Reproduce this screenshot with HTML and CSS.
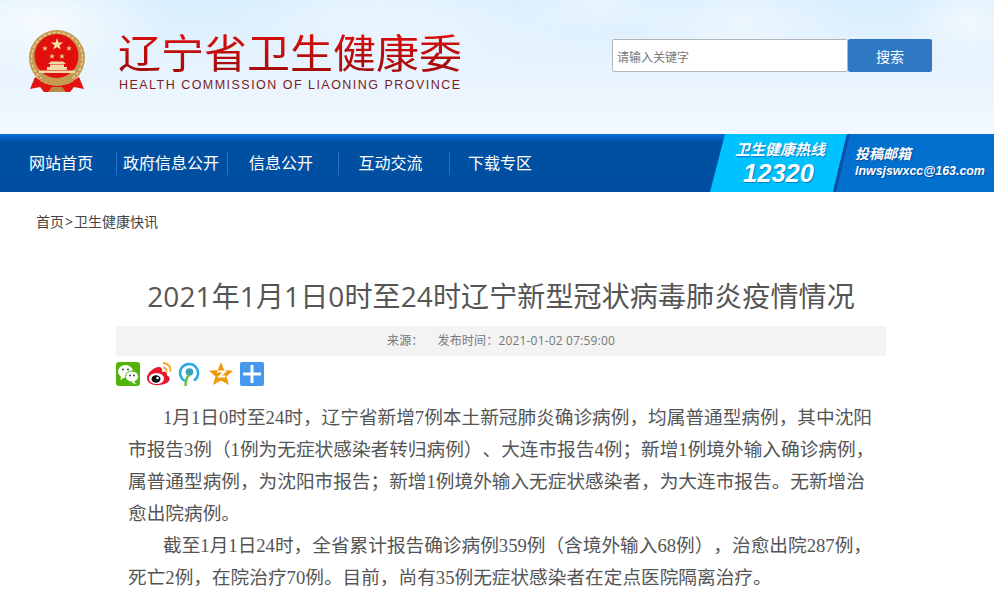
FILE: index.html
```html
<!DOCTYPE html>
<html lang="zh-CN">
<head>
    <meta charset="UTF-8">
    <meta name="viewport" content="width=device-width, initial-scale=1.0">
    <title>2021年1月1日0时至24时辽宁新型冠状病毒肺炎疫情情况</title>
    <link rel="stylesheet" href="styles.css">
</head>
<body>
    <!-- Header -->
    <header class="header">
        <svg class="emblem" width="58" height="62" viewBox="0 0 58 62">
            <path d="M7 47 L2 59 L12 57 L16 62 L42 62 L46 57 L56 59 L51 47 L40 54 L18 54 Z" fill="#e2140f"/>
            <circle cx="29" cy="28" r="28" fill="#c49a52"/>
            <circle cx="29" cy="28" r="25.500" fill="none" stroke="#e6cf94" stroke-width="1.500" stroke-dasharray="3 2"/>
            <circle cx="28.500" cy="26" r="22" fill="#e30f0e"/>
            <path d="M12 51 Q29 60 46 51 L42 46 Q29 52 16 46 Z" fill="#c49a52"/>
            <path d="M24 57 h10 l4 5 h-18 Z" fill="#b98a45"/>
            <polygon points="29,8 30.500,12.400 35.200,12.400 31.400,15.200 32.800,19.600 29,16.900 25.200,19.600 26.600,15.200 22.800,12.400 27.500,12.400" fill="#f6e3a8"/>
            <polygon points="17,15.500 17.800,17.500 19.800,17.500 18.200,18.800 18.800,20.800 17,19.600 15.200,20.800 15.800,18.800 14.200,17.500 16.200,17.500" fill="#eccf86"/>
            <polygon points="41,15.500 41.800,17.500 43.800,17.500 42.200,18.800 42.800,20.800 41,19.600 39.200,20.800 39.800,18.800 38.200,17.500 40.200,17.500" fill="#eccf86"/>
            <polygon points="24,23.500 24.800,25.500 26.800,25.500 25.200,26.800 25.800,28.800 24,27.600 22.200,28.800 22.800,26.800 21.200,25.500 23.200,25.500" fill="#eccf86"/>
            <polygon points="34,23.500 34.800,25.500 36.800,25.500 35.200,26.800 35.800,28.800 34,27.600 32.200,28.800 32.800,26.800 31.200,25.500 33.200,25.500" fill="#eccf86"/>
            <path d="M20 34 L23 31.500 H35 L38 34 Z M22 34.500 H36 V37 H22 Z M19 37 H39 V40 H19 Z M11 40.500 H47 V43 H11 Z" fill="#f0d9a8"/>
        </svg>
        <div class="brand">
            <div class="brand-cn">辽宁省卫生健康委</div>
            <div class="brand-en">HEALTH COMMISSION OF LIAONING PROVINCE</div>
        </div>
        <form class="search">
            <input class="search-input" type="text" placeholder="请输入关键字">
            <button class="search-btn" type="button">搜索</button>
        </form>
    </header>

    <!-- Nav -->
    <nav class="nav">
        <ul class="nav-list">
            <li class="nav-item nav-home">网站首页</li>
            <li class="nav-item nav-gov">政府信息公开</li>
            <li class="nav-item">信息公开</li>
            <li class="nav-item nav-talk">互动交流</li>
            <li class="nav-item nav-down">下载专区</li>
        </ul>
        <div class="hotline">
            <div class="hotline-title">卫生健康热线</div>
            <div class="hotline-num">12320</div>
        </div>
        <div class="mailbox">
            <div class="mailbox-title">投稿邮箱</div>
            <div class="mailbox-addr">lnwsjswxcc@163.com</div>
        </div>
    </nav>

    <div class="crumbs">首页<span class="crumb-sep">&gt;</span>卫生健康快讯</div>

    <!-- Article -->
    <main class="article">
        <h1 class="article-title">2021年1月1日0时至24时辽宁新型冠状病毒肺炎疫情情况</h1>
        <div class="meta">
            <span>来源：</span>
            <span>发布时间：2021-01-02 07:59:00</span>
        </div>
        <div class="share">
            <svg class="share-icon" width="24" height="24" viewBox="0 0 24 24">
                <rect width="24" height="24" rx="3" fill="#52b40a"/>
                <ellipse cx="9.500" cy="9.500" rx="7.500" ry="6.500" fill="#fff"/>
                <path d="M5 13 L4.500 18 L9 15 Z" fill="#fff"/>
                <ellipse cx="16" cy="14.500" rx="6.500" ry="5.500" fill="#fff" stroke="#52b40a"/>
                <path d="M18 19 L20 22.500 L15 20 Z" fill="#fff"/>
                <circle cx="7" cy="7.500" r="1" fill="#444"/>
                <circle cx="12" cy="7.500" r="1" fill="#444"/>
                <circle cx="14" cy="13.500" r="1" fill="#444"/>
                <circle cx="18" cy="13.500" r="1" fill="#444"/>
            </svg>
            <svg class="share-icon" width="24" height="24" viewBox="0 0 24 24">
                <path d="M0 16 C0 11 7 5 12 5 C15 5 15.500 8 15 10 C18 9 21 10 19.500 13 C22 14 23.500 16 22 19 C19 24 0 26 0 16 Z" fill="#e6162d"/>
                <ellipse cx="9.500" cy="16.500" rx="7.500" ry="5.500" fill="#fff"/>
                <ellipse cx="9" cy="17" rx="4.500" ry="3.800" fill="#111"/>
                <circle cx="10.500" cy="16" r="1.300" fill="#fff"/>
                <path d="M16 1 A7.500 7.500 0 0 1 23.500 10" fill="none" stroke="#f5a623" stroke-width="2"/>
                <path d="M16 5.500 A3.500 3.500 0 0 1 19.500 9.500" fill="none" stroke="#f5a623" stroke-width="2"/>
            </svg>
            <svg class="share-icon" width="24" height="24" viewBox="0 0 24 24">
                <path d="M7 19 A9 9 0 1 1 16 18.500" fill="none" stroke="#27a9e1" stroke-width="2.500"/>
                <circle cx="11.500" cy="10" r="3.800" fill="#3aa2b5"/>
                <path d="M11 13 C8 16 7.500 20 7.500 24" fill="none" stroke="#6fbe4a" stroke-width="2.500"/>
            </svg>
            <svg class="share-icon" width="24" height="24" viewBox="0 0 24 24">
                <path d="M12 0 L15.200 8 L24 8.800 L17.500 14.500 L20 23 L12 18.500 L4 23 L6.500 14.500 L0 8.800 L8.800 8 Z" fill="#f0990f"/>
                <path d="M8 9.500 H16 L10.500 14.500 H16.500" fill="none" stroke="#fff" stroke-width="2"/>
            </svg>
            <svg class="share-icon" width="24" height="24" viewBox="0 0 24 24">
                <rect width="24" height="24" rx="2" fill="#4598ee"/>
                <rect x="10.500" y="3" width="3" height="18" fill="#fff"/>
                <rect x="3" y="10.500" width="18" height="3" fill="#fff"/>
            </svg>
        </div>
        <div class="content">
            <p>1月1日0时至24时，辽宁省新增7例本土新冠肺炎确诊病例，均属普通型病例，其中沈阳市报告3例（1例为无症状感染者转归病例）、大连市报告4例；新增1例境外输入确诊病例，属普通型病例，为沈阳市报告；新增1例境外输入无症状感染者，为大连市报告。无新增治愈出院病例。</p>
            <p>截至1月1日24时，全省累计报告确诊病例359例（含境外输入68例），治愈出院287例，死亡2例，在院治疗70例。目前，尚有35例无症状感染者在定点医院隔离治疗。</p>
        </div>
    </main>
</body>
</html>
```

FILE: styles.css
```css
* {
    box-sizing: border-box;
}
html, body {
    height: 100%;
    overflow: hidden;
}
body {
    margin: 0;
    background: #fff;
    font-family: "Open Sans", "Noto Sans CJK SC", sans-serif;
    color: #333;
    text-spacing-trim: space-all;
}

/* header */
.header {
    height: 134px;
    display: flex;
    align-items: flex-start;
    background:
        radial-gradient(ellipse 130px 60px at 40px 20px, rgba(255,255,255,.75), transparent),
        radial-gradient(ellipse 140px 40px at 360px 10px, rgba(255,255,255,.25), transparent),
        radial-gradient(ellipse 170px 50px at 420px 25px, rgba(255,255,255,.3), transparent),
        radial-gradient(ellipse 90px 30px at 600px 5px, rgba(255,255,255,.4), transparent),
        radial-gradient(ellipse 110px 45px at 740px 20px, rgba(255,255,255,.45), transparent),
        radial-gradient(ellipse 70px 45px at 970px 20px, rgba(255,255,255,.6), transparent),
        linear-gradient(#d8eefe 0, #e6f3fe 45%, #f3f8fe 100%);
}
.emblem {
    margin: 30px 0 0 28px;
    flex: none;
}
.brand {
    margin: 28px 0 0 32px;
    width: 346px;
    flex: none;
}
.brand-cn {
    font-family: "Noto Sans CJK SC", sans-serif;
    font-size: 43px;
    line-height: 48px;
    white-space: nowrap;
    transform: scaleY(.92);
    transform-origin: 0 0;
    background: linear-gradient(#e40f0c, #a80c0c 85%);
    -webkit-background-clip: text;
    background-clip: text;
    color: transparent;
}
.brand-en {
    margin: 2px 0 0 1px;
    font-family: "Liberation Sans", sans-serif;
    font-size: 12.500px;
    line-height: 14px;
    letter-spacing: 1.47px;
    color: #7a1c22;
    white-space: nowrap;
}
.search {
    display: flex;
    margin: 39px 0 0 148px;
}
.search-input {
    width: 236px;
    height: 33px;
    padding: 3px 4px 0;
    border: 1px solid #b5b5b5;
    border-radius: 2px;
    background: #fff;
    font-family: inherit;
    font-size: 12px;
}
.search-input::placeholder {
    color: #777;
    opacity: 1;
}
.search-btn {
    width: 84px;
    height: 33px;
    border: none;
    border-radius: 2px;
    background: #2f78c4;
    color: #fff;
    font-family: inherit;
    font-size: 14px;
}

/* nav */
.nav {
    height: 58px;
    display: flex;
    background: linear-gradient(#0b6fe0 0, #0050a2 8px, #004fa2 100%);
}
.nav-list {
    display: flex;
    align-items: center;
    width: 710px;
    margin: 0;
    padding: 0 0 0 6px;
    list-style: none;
    flex: none;
}
.nav-item {
    width: 111px;
    height: 23px;
    padding-right: 4px;
    border-left: 1px solid #2a70d0;
    font-size: 16px;
    line-height: 23px;
    text-align: center;
    color: #fff;
}
.nav-home {
    width: 110px;
    padding-right: 0;
    border-left: none;
}
.nav-gov {
    padding-right: 2px;
}
.nav-talk {
    padding-right: 7px;
}
.nav-down {
    padding-right: 10px;
}
.hotline {
    width: 137px;
    flex: none;
    padding-top: 6px;
    background: #00c2ff;
    clip-path: polygon(15px 0, 100% 0, 123px 100%, 0 100%);
    font-style: italic;
    font-weight: bold;
    color: #fff;
    text-align: center;
    text-shadow: 1px 1px 1px rgba(0,60,140,.5);
}
.hotline-title {
    padding-left: 3px;
    font-size: 15px;
    line-height: 18px;
    white-space: nowrap;
}
.hotline-num {
    font-family: "Liberation Sans", sans-serif;
    font-size: 25.500px;
    line-height: 30px;
}
.mailbox {
    position: relative;
    flex: 1;
    margin-left: -14px;
    padding: 11px 0 0 22px;
    background: #0370cf;
    clip-path: polygon(14px 0, 100% 0, 100% 100%, 0 100%);
    font-style: italic;
    font-weight: bold;
    color: #fff;
    text-shadow: 1px 1px 1px rgba(0,40,110,.5);
}
.mailbox::before {
    content: "";
    position: absolute;
    top: 0;
    bottom: 0;
    left: 0;
    width: 17px;
    background: #0a4ea6;
    clip-path: polygon(14px 0, 17px 0, 3px 100%, 0 100%);
}
.mailbox-title {
    font-size: 14px;
    line-height: 18px;
}
.mailbox-addr {
    font-family: "Liberation Sans", sans-serif;
    font-size: 12.400px;
    line-height: 17px;
    white-space: nowrap;
}

/* breadcrumb */
.crumbs {
    padding: 20px 0 0 36px;
    font-size: 14px;
    line-height: 20px;
    color: #444;
}
.crumb-sep {
    padding: 0 1px;
}

/* article */
.article {
    width: 770px;
    margin-left: 116px;
}
.article-title {
    margin: 44px 0 0;
    font-size: 28px;
    font-weight: normal;
    line-height: 40px;
    letter-spacing: .12px;
    text-align: center;
    white-space: nowrap;
    color: #555;
}
.meta {
    display: flex;
    justify-content: center;
    gap: 14px;
    height: 30px;
    margin-top: 10px;
    background: #f3f3f3;
    font-size: 12px;
    line-height: 30px;
    letter-spacing: .18px;
    color: #777;
}
.share {
    display: flex;
    gap: 7px;
    margin-top: 6px;
}
.content {
    width: 748px;
    margin: 16px 0 0 12px;
    font-size: 18.670px;
    line-height: 32px;
    font-family: "Liberation Serif", "Noto Sans CJK SC", serif;
    color: #555;
}
.content p {
    margin: 0;
    text-indent: 35px;
}
```
